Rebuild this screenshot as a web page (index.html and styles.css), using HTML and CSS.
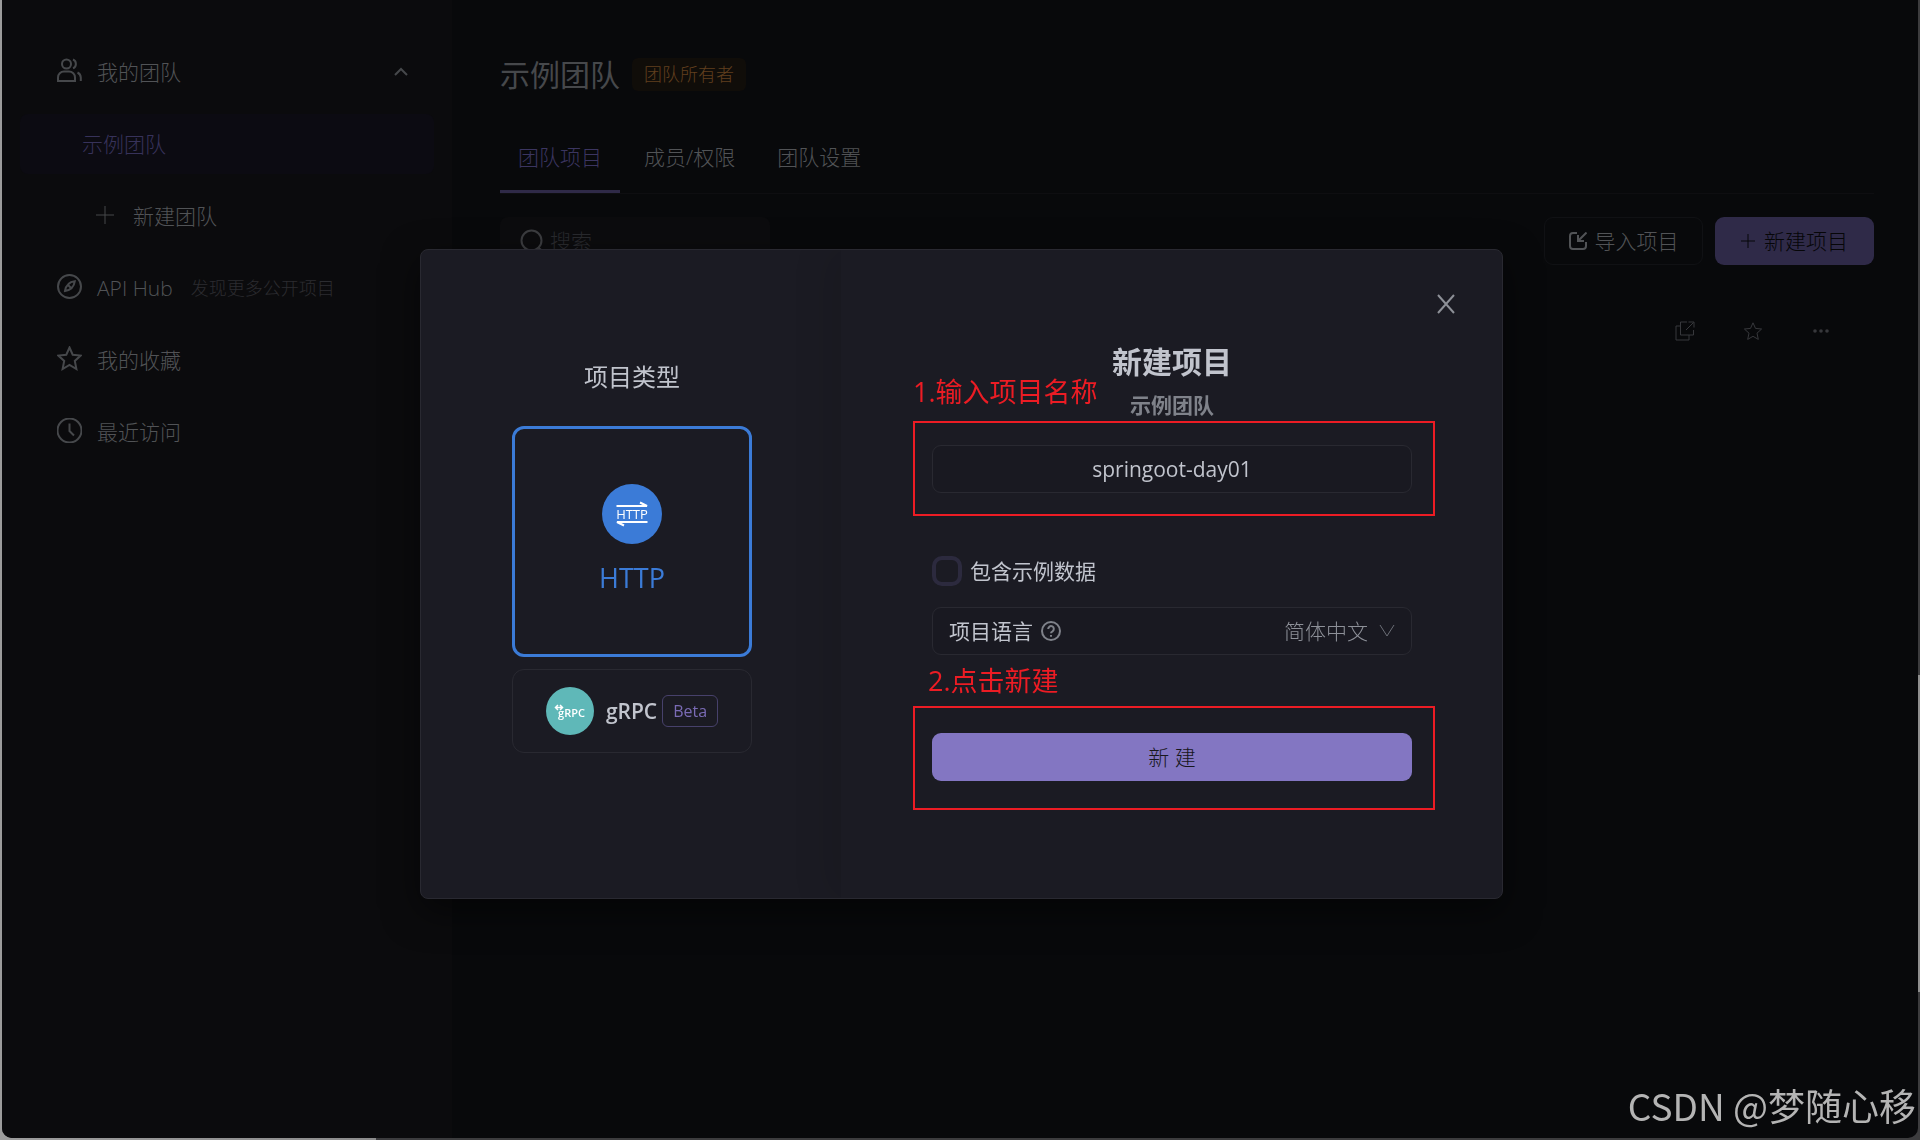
FILE: index.html
```
<!DOCTYPE html>
<html lang="zh-CN">
<head>
<meta charset="utf-8">
<title>示例团队</title>
<link rel="stylesheet" href="styles.css">
</head>
<body>
<div class="window">
  <nav class="sidebar">
    <a class="nav-item" href="#">
      <svg class="icon-lg" viewBox="0 0 25 25"><circle cx="9.500" cy="6" r="4.500"/><path d="M1 23v-3.500a6 6 0 0 1 6-6h5a6 6 0 0 1 6 6V23zM16 1.500a4.800 4.800 0 0 1 0 8.800M20.500 14.500a6 6 0 0 1 3.300 5V23"/></svg>
      <span>我的团队</span>
      <svg class="chevron" viewBox="0 0 14 14"><path d="M1 10l6-6 6 6"/></svg>
    </a>
    <a class="nav-item nav-child active" href="#">示例团队</a>
    <a class="nav-item nav-add" href="#">
      <svg class="icon-md" viewBox="0 0 18 18"><path d="M9 0v18M0 9h18"/></svg>
      <span>新建团队</span>
    </a>
    <a class="nav-item" href="#">
      <svg class="icon-lg" viewBox="0 0 25 25"><circle cx="12.500" cy="12.500" r="11.500"/><path d="M17.800 7.200c-5.500.6-8.800 3.600-9.800 9.800 5.800-.8 9-3.800 9.800-9.800zM11 11l3 3"/></svg>
      <span>API Hub</span>
      <small class="nav-note">发现更多公开项目</small>
    </a>
    <a class="nav-item" href="#">
      <svg class="icon-lg" viewBox="0 0 25 25"><path d="M12.500 1.500l3.200 7.200 8 .9-5.900 5.300 1.600 8.100-6.900-4-6.900 4 1.600-8.100L1.300 9.600l8-.9z"/></svg>
      <span>我的收藏</span>
    </a>
    <a class="nav-item" href="#">
      <svg class="icon-lg" viewBox="0 0 25 25"><circle cx="12.500" cy="12.500" r="12"/><path d="M12.500 5.500V13l4.500 4.500"/></svg>
      <span>最近访问</span>
    </a>
  </nav>

  <main class="main">
    <header class="team-head">
      <h1 class="team-name">示例团队</h1>
      <span class="owner-tag">团队所有者</span>
    </header>
    <div class="tabs">
      <a class="tab active" href="#">团队项目</a>
      <a class="tab" href="#">成员/权限</a>
      <a class="tab" href="#">团队设置</a>
    </div>
    <div class="toolbar">
      <label class="search">
        <svg class="icon-search" viewBox="0 0 24 24"><circle cx="11.500" cy="11.500" r="10"/><path d="M18.500 18.500l5 5"/></svg>
        <input class="search-input" type="text" placeholder="搜索" aria-label="搜索">
      </label>
      <button class="btn btn-outline" type="button">
        <svg class="icon-md" viewBox="0 0 18 18"><path d="M8 1H4a3 3 0 0 0-3 3v10a3 3 0 0 0 3 3h10a3 3 0 0 0 3-3v-4M17.500 .5L9 9M9 3v6h6"/></svg>
        导入项目
      </button>
      <button class="btn btn-primary" type="button">
        <svg class="icon-sm" viewBox="0 0 14 14"><path d="M7 0v14M0 7h14"/></svg>
        新建项目
      </button>
    </div>
    <div class="project-actions">
      <button class="icon-btn" type="button" aria-label="克隆项目"><svg viewBox="0 0 20 20"><path d="M12 1H5.500v13H18.500V9M5.500 5H1v14h13v-5M11 9l7.500-7.500M13.500 1h5.500v5.500"/></svg></button>
      <button class="icon-btn" type="button" aria-label="收藏"><svg viewBox="0 0 20 20"><path d="M10 1.800l2.500 5.600 6.100.6-4.600 4.200 1.300 6.200L10 15.300l-5.300 3.100L6 12.200 1.400 8l6.100-.6z"/></svg></button>
      <button class="icon-btn" type="button" aria-label="更多"><svg class="dots" viewBox="0 0 20 20"><circle cx="4" cy="10" r="1.800"/><circle cx="10" cy="10" r="1.800"/><circle cx="16" cy="10" r="1.800"/></svg></button>
    </div>
  </main>
</div>

<div class="overlay">
  <section class="modal" role="dialog" aria-label="新建项目">
    <div class="types">
      <h2 class="types-title">项目类型</h2>
      <button class="type-card type-http" type="button">
        <svg class="http-logo" viewBox="0 0 60 60"><circle cx="30" cy="30" r="30"/><path d="M14.500 22H45l-7-3.500M45.500 38H15l7 3.500"/><text x="30" y="34.500" text-anchor="middle">HTTP</text></svg>
        <span>HTTP</span>
      </button>
      <button class="type-card type-grpc" type="button">
        <svg class="grpc-logo" viewBox="0 0 48 48"><circle cx="24" cy="24" r="24"/><path d="M9.500 20.500h7M12 18l-2.500 2.500L12 23M14 18l2.500 2.500L14 23"/><text x="25.500" y="30" text-anchor="middle">gRPC</text></svg>
        <span>gRPC</span>
        <span class="beta">Beta</span>
      </button>
    </div>
    <form class="form">
      <button class="close" type="button" aria-label="关闭"><svg viewBox="0 0 20 20"><path d="M2 1l16 18M18 1L2 19"/></svg></button>
      <h2 class="form-title">新建项目</h2>
      <p class="form-team">示例团队</p>
      <div class="marked">
        <input class="name-input" type="text" value="springoot-day01" aria-label="项目名称">
        <span class="note note-name">1.输入项目名称</span>
      </div>
      <label class="check"><input class="check-box" type="checkbox">包含示例数据</label>
      <div class="lang">
        <label for="lang">项目语言</label>
        <svg class="help" viewBox="0 0 20 20"><circle cx="10" cy="10" r="9"/><path d="M7.200 8a2.800 2.800 0 1 1 4.300 2.300c-1 .6-1.500 1-1.500 2M10 14v1.700"/></svg>
        <select class="lang-select" id="lang"><option>简体中文</option></select>
        <svg class="arrow" viewBox="0 0 16 16"><path d="M1 2l7 11 7-11"/></svg>
      </div>
      <div class="marked marked-submit">
        <button class="submit" type="button">新 建</button>
        <span class="note note-submit">2.点击新建</span>
      </div>
    </form>
  </section>
</div>
<div class="watermark">CSDN @梦随心移</div>
</body>
</html>
```
FILE: styles.css
```
* { box-sizing: border-box; }
body {
  margin: 0;
  min-height: 100vh;
  display: flex;
  padding: 0 2px 2px;
  background:
    linear-gradient(#3c3c3e 675px, #8f8f8f 675px, #8f8f8f 992px, #3c3c3e 992px) right top / 2px 100% no-repeat,
    linear-gradient(90deg, #9c9c9c 0, #8c8c8c 376px, #3c3c3e 376px);
  font-family: "Open Sans", "Noto Sans CJK SC", sans-serif;
  font-size: 21px;
  line-height: 32px;
}
a { color: inherit; text-decoration: none; }
button, input, select { font: inherit; color: inherit; padding: 0; margin: 0; background: none; border: 0; }
h1, h2, p { margin: 0; }
svg { display: block; flex: none; fill: none; stroke: currentColor; stroke-width: 2; }

.window { flex: 1; display: flex; background: #08090b; border-radius: 0 0 10px 10px; overflow: hidden; color: #515356; font-weight: 300; }

.sidebar { width: 450px; padding: 42px 18px; display: flex; flex-direction: column; gap: 12px; background: #0b0b0d; }
.nav-item { height: 60px; display: flex; align-items: center; padding: 0 26px 0 37px; border-radius: 8px; }
.nav-item span { margin-left: 15px; }
.nav-item svg { color: #46484b; }
.nav-child { padding-left: 62px; }
.nav-child.active { background: #0c0b12; color: #37325a; }
.nav-add { padding-left: 76px; }
.nav-add span { margin-left: 19px; }
.nav-note { margin-left: 18px; font-size: 18px; color: #2b2c30; }
.icon-lg { width: 25px; height: 25px; margin-bottom: 3px; }
.icon-md { width: 18px; height: 18px; }
.icon-sm { width: 14px; height: 14px; stroke-width: 1; }
.nav-add .icon-md { stroke-width: 1; margin-bottom: 2px; }
.chevron { width: 14px; height: 14px; margin-left: auto; }

.main { flex: 1; padding: 42px 44px 0 48px; }
.team-head { display: flex; align-items: center; gap: 12px; height: 65px; }
.team-name { font-size: 30px; font-weight: 400; color: #46484b; }
.owner-tag { height: 33px; padding: 0 12px; border-radius: 6px; background: #100d09; color: #613f1e; font-size: 18px; }
.tabs { display: flex; margin-top: 16px; border-bottom: 1px solid #0e0e11; }
.tab { padding: 18px 18px 20px; margin-right: 6px; height: 70px; }
.tab.active { border-bottom: 3px solid #2f2a48; color: #3b3560; }
.toolbar { display: flex; gap: 12px; margin-top: 23px; }
.search { width: 270px; height: 48px; margin-right: auto; padding: 0 20px; display: flex; align-items: center; gap: 6px; border-radius: 8px; background: #0c0c0e; }
.search-input { flex: 1; min-width: 0; outline: 0; }
.search-input::placeholder { color: #292a2e; opacity: 1; }
.icon-search { width: 24px; height: 24px; color: #3c3d40; }
.btn { width: 159px; height: 48px; display: flex; align-items: center; justify-content: center; gap: 8px; border-radius: 9px; font-weight: 300; }
.btn-outline { border: 1px solid #101114; }
.btn-primary { background: #2f2a48; color: #060608; gap: 9px; }
.project-actions { display: flex; justify-content: flex-end; gap: 48px; margin-top: 56px; padding-right: 43px; color: #37383c; }
.icon-btn { width: 20px; height: 20px; }
.icon-btn svg { stroke-width: 1; }
.icon-btn .dots { fill: currentColor; stroke: none; }

.overlay { position: fixed; inset: 0; display: flex; align-items: flex-start; justify-content: center; padding-top: 249px; }
.modal { position: relative; width: 1083px; min-height: 650px; margin-left: 3px; display: flex; border: 1px solid #292931; border-radius: 8px; background: #1b1b23; color: #c1c4cd; box-shadow: 0 12px 36px rgba(0, 0, 0, .5); overflow: hidden; }
.types { width: 420px; padding: 111px 0 0 91px; display: flex; flex-direction: column; align-items: flex-start; }
.types-title { width: 240px; text-align: center; font-size: 24px; font-weight: 400; }
.type-card { width: 240px; display: flex; align-items: center; justify-content: center; border-radius: 12px; }
.type-http { flex-direction: column; gap: 18px; height: 231px; margin-top: 33px; padding-bottom: 5px; border: 3px solid #3b7bd7; color: #3b7bd7; font-size: 27px; font-weight: 500; }
.http-logo { width: 60px; height: 60px; stroke: #fff; }
.http-logo circle { fill: #3b7bd7; stroke: none; }
.http-logo text { font-size: 13px; font-weight: 500; fill: #fff; stroke: none; }
.type-grpc { height: 84px; margin-top: 12px; border: 1px solid #292931; font-weight: 600; }
.type-grpc span { margin-left: 12px; }
.grpc-logo { width: 48px; height: 48px; stroke: #fff; }
.grpc-logo circle { fill: #5fb8b8; stroke: none; }
.grpc-logo path { stroke-width: 1.500; }
.grpc-logo text { font-size: 11px; font-weight: 600; fill: #fff; stroke: none; }
.type-grpc .beta { margin-left: 5px; height: 32px; padding: 0 10px; border: 1px solid #47416b; border-radius: 6px; color: #7a6bb5; font-size: 16px; font-weight: 400; line-height: 30px; }

.form { flex: 1; padding: 87px 90px 0 91px; display: flex; flex-direction: column; box-shadow: -12px 0 36px rgba(0, 0, 0, .1); }
.close { position: absolute; top: 44px; right: 46px; width: 20px; height: 20px; color: #8d9097; }
.form-title { text-align: center; font-size: 30px; font-weight: 700; line-height: 50px; }
.form-team { padding-top: 2px; text-align: center; font-weight: 700; color: #7f828a; line-height: 32px; }
.marked { position: relative; margin: 0 -23px 0 -19px; padding: 22px 21px 21px 17px; border: 2px solid #ec1c24; }
.name-input { display: block; width: 100%; height: 48px; border: 1px solid #292931; border-radius: 9px; text-align: center; background: #191921; }
.note { position: absolute; color: #ec1c24; font-size: 27px; line-height: 40px; white-space: nowrap; }
.note-name { left: -2px; top: -51px; }
.note-submit { left: 13px; top: -47px; }
.check { display: flex; align-items: center; gap: 8px; height: 32px; margin-top: 39px; }
.check-box { appearance: none; width: 30px; height: 30px; border: 4px solid #2c2a3e; border-radius: 10px; }
.lang { display: flex; align-items: center; height: 48px; margin-top: 20px; padding: 0 16px; border: 1px solid #292931; border-radius: 9px; background: #191921; }
.help { width: 20px; height: 20px; margin-left: 8px; color: #7f828a; }
.lang-select { appearance: none; margin-left: auto; color: #8d9098; font-weight: 300; }
.arrow { width: 16px; height: 16px; margin-left: 11px; color: #6b6e76; stroke-width: 1; }
.marked-submit { margin-top: 51px; padding-top: 25px; padding-bottom: 27px; }
.submit { display: block; width: 100%; height: 48px; border-radius: 9px; background: #8376c2; color: #17171c; font-weight: 300; }

.watermark { position: fixed; right: 4px; bottom: 11px; color: #b4b4b4; font-family: "Noto Sans CJK SC", sans-serif; font-size: 37px; font-weight: 400; line-height: 48px; }
```
